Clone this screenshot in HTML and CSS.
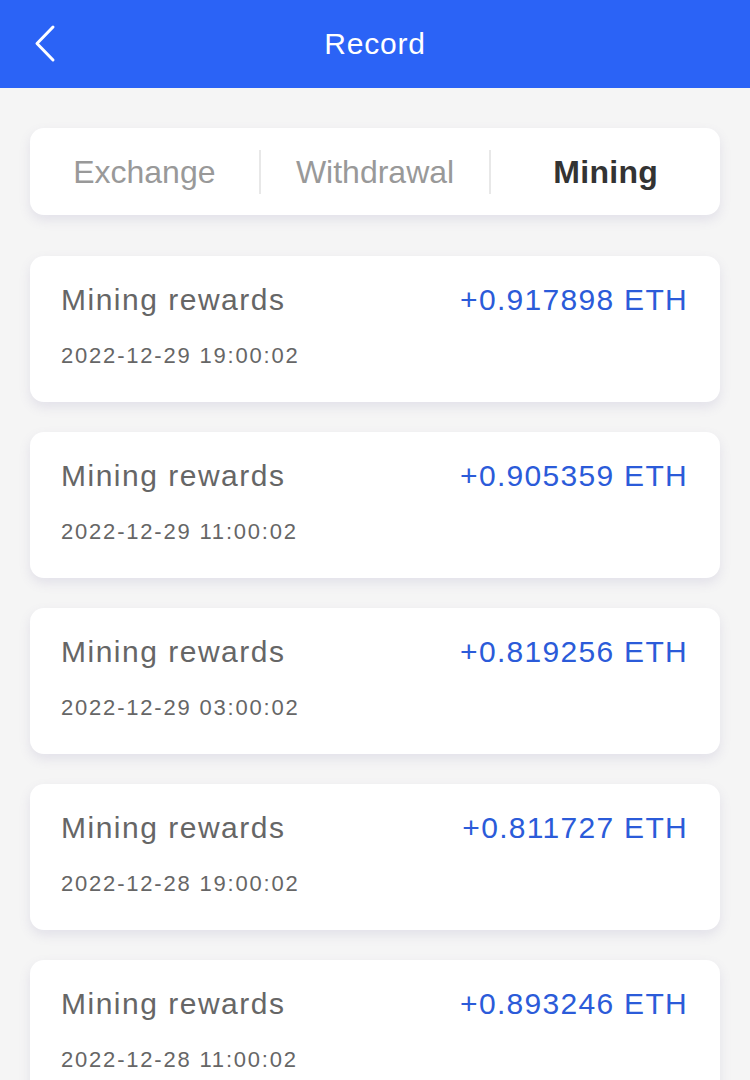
FILE: index.html
```html
<!DOCTYPE html>
<html lang="en">
<head>
  <meta charset="UTF-8" />
  <meta name="viewport" content="width=device-width, initial-scale=1.0" />
  <title>Record</title>
  <link rel="stylesheet" href="styles.css">
</head>
<body>
  <div class="header">
    <a class="back" href="#">
      <svg width="24" height="40" viewBox="0 0 24 40"><path d="M19 3 L3 19.5 L19 36" fill="none" stroke="#fff" stroke-width="3" stroke-linecap="round" stroke-linejoin="round"/></svg>
    </a>
    <h1>Record</h1>
  </div>

  <div class="page">
    <div class="tabs">
      <div class="tab">Exchange</div>
      <div class="tab">Withdrawal</div>
      <div class="tab active">Mining</div>
    </div>

    <div class="list">
      <div class="item">
        <div class="row">
          <span class="label">Mining rewards</span>
          <span class="amount">+0.917898 ETH</span>
        </div>
        <div class="time">2022-12-29 19:00:02</div>
      </div>
      <div class="item">
        <div class="row">
          <span class="label">Mining rewards</span>
          <span class="amount">+0.905359 ETH</span>
        </div>
        <div class="time">2022-12-29 11:00:02</div>
      </div>
      <div class="item">
        <div class="row">
          <span class="label">Mining rewards</span>
          <span class="amount">+0.819256 ETH</span>
        </div>
        <div class="time">2022-12-29 03:00:02</div>
      </div>
      <div class="item">
        <div class="row">
          <span class="label">Mining rewards</span>
          <span class="amount">+0.811727 ETH</span>
        </div>
        <div class="time">2022-12-28 19:00:02</div>
      </div>
      <div class="item">
        <div class="row">
          <span class="label">Mining rewards</span>
          <span class="amount">+0.893246 ETH</span>
        </div>
        <div class="time">2022-12-28 11:00:02</div>
      </div>
    </div>
  </div>
</body>
</html>
```

FILE: styles.css
```css
body {
  margin: 0;
  font-family: 'Liberation Sans', Arial, sans-serif;
  background: #f5f5f5;
  color: #666;
}
.header {
  position: relative;
  height: 88px;
  background: #2b63f6;
  display: flex;
  align-items: center;
  justify-content: center;
}
.header h1 {
  margin: 0;
  font-size: 30px;
  font-weight: normal;
  letter-spacing: 0.8px;
  color: #fff;
}
.back {
  position: absolute;
  left: 34px;
  top: 24px;
  display: block;
  height: 40px;
}
.page {
  padding: 40px 30px 0;
}
.tabs {
  display: flex;
  align-items: center;
  height: 87px;
  background: #fff;
  border-radius: 14px;
  box-shadow: 0 5px 12px rgba(110, 105, 160, 0.14);
}
.tab {
  flex: 1;
  text-align: center;
  font-size: 32px;
  color: #999;
  line-height: 44px;
}
.tab + .tab {
  border-left: 2px solid #e8e8e8;
}
.tab.active {
  color: #333;
  font-weight: bold;
  letter-spacing: 0.3px;
}
.list {
  display: flex;
  flex-direction: column;
  gap: 30px;
  margin-top: 41px;
}
.item {
  height: 146px;
  box-sizing: border-box;
  padding: 27px 32px 0 31px;
  background: #fff;
  border-radius: 14px;
  box-shadow: 0 5px 12px rgba(110, 105, 160, 0.14);
}
.row {
  display: flex;
  justify-content: space-between;
  align-items: baseline;
}
.label {
  font-size: 30px;
  letter-spacing: 1.5px;
  color: #666;
}
.amount {
  font-size: 30px;
  letter-spacing: 1.3px;
  color: #2b5bd9;
}
.time {
  margin-top: 26px;
  font-size: 22px;
  letter-spacing: 1.8px;
  color: #666;
}
```
